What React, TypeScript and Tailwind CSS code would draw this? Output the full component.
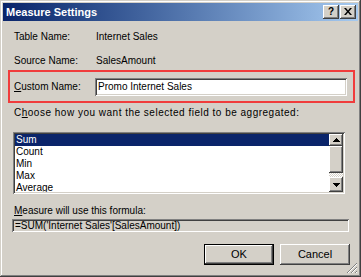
const raised =
  "shadow-[inset_-1px_-1px_0_#404040,inset_1px_1px_0_#ffffff,inset_-2px_-2px_0_#808080]";
const sunken =
  "shadow-[inset_1px_1px_0_#808080,inset_-1px_-1px_0_#ffffff,inset_2px_2px_0_#404040,inset_-2px_-2px_0_#d4d0c8]";

function Up() {
  return (
    <svg width="7" height="4" viewBox="0 0 7 4">
      <path d="M3 0h1v1h1v1h1v1h1v1H0V3h1V2h1V1h1z" fill="#000" />
    </svg>
  );
}
function Down() {
  return (
    <svg width="7" height="4" viewBox="0 0 7 4">
      <path d="M0 0h7v1H6v1H5v1H4v1H3V3H2V2H1V1H0z" fill="#000" />
    </svg>
  );
}

export default function App() {
  const items = ["Sum", "Count", "Min", "Max", "Average"];
  return (
    <div className="relative w-[361px] h-[277px] bg-[#d4d0c8] p-[3px] flex flex-col text-[10px] text-black font-['Liberation_Sans',Arial,sans-serif] shadow-[inset_-1px_-1px_0_#404040,inset_1px_1px_0_#d4d0c8,inset_-2px_-2px_0_#808080,inset_2px_2px_0_#ffffff] overflow-hidden">
      {/* Title bar */}
      <div className="h-[18px] flex items-center justify-between pl-[3px] pr-[2px] bg-gradient-to-r from-[#0a246a] to-[#a6caf0]">
        <span className="text-white font-bold text-[11px] leading-none">Measure Settings</span>
        <div className="flex gap-[1px]">
          <div className={`w-[16px] h-[14px] bg-[#d4d0c8] ${raised} flex items-center justify-center text-[10px] font-bold leading-none pb-[1px]`}>
            ?
          </div>
          <div className={`w-[16px] h-[14px] bg-[#d4d0c8] ${raised} flex items-center justify-center pb-[1px]`}>
            <svg width="8" height="7" viewBox="0 0 8 7">
              <path d="M0 0h2l2 2.5L6 0h2L5 3.5 8 7H6L4 4.5 2 7H0l3-3.5z" fill="#000" />
            </svg>
          </div>
        </div>
      </div>

      {/* Rows */}
      <div className="mt-[7px] h-[16px] flex items-center pl-[11px]">
        <span className="w-[82px]">Table Name:</span>
        <span>Internet Sales</span>
      </div>
      <div className="mt-[8px] h-[16px] flex items-center pl-[11px]">
        <span className="w-[82px]">Source Name:</span>
        <span>SalesAmount</span>
      </div>

      {/* Custom name highlighted */}
      <div className="mt-[2px] ml-[5px] mr-[3px] h-[33px] border-2 border-[#f03c3c] flex items-center pl-[4px] pr-[6px]">
        <span className="w-[81px]">
          <span className="underline">C</span>ustom Name:
        </span>
        <div className={`flex-1 h-[18px] bg-white ${sunken} flex items-center pl-[3px]`}>
          Promo Internet Sales
        </div>
      </div>

      <div className="mt-[1px] h-[16px] flex items-center pl-[11px]">
        <span className="tracking-[0.5px]">
          C<span className="underline">h</span>oose how you want the selected field to be aggregated:
        </span>
      </div>

      {/* Listbox */}
      <div className={`mt-[12px] ml-[10px] w-[332px] h-[62px] bg-white ${sunken} p-[2px] flex`}>
        <div className="flex-1 flex flex-col overflow-hidden">
          {items.map((it, i) => (
            <div
              key={it}
              className={`h-[12px] shrink-0 leading-[12px] pl-[1px] ${i === 0 ? "bg-[#0a246a] text-white" : ""}`}
            >
              {it}
            </div>
          ))}
        </div>
        <div className="w-[14px] flex flex-col">
          <div className={`h-[12px] bg-[#d4d0c8] ${raised} flex items-center justify-center`}>
            <Up />
          </div>
          <div className={`h-[27px] bg-[#d4d0c8] ${raised}`} />
          <div className="flex-1 bg-[repeating-conic-gradient(#ffffff_0_25%,#d4d0c8_0_50%)] bg-[length:2px_2px]" />
          <div className={`h-[15px] bg-[#d4d0c8] ${raised} flex items-center justify-center`}>
            <Down />
          </div>
        </div>
      </div>

      <div className="mt-[8px] h-[16px] flex items-center pl-[11px]">
        <span>
          <span className="underline">M</span>easure will use this formula:
        </span>
      </div>
      <div className={`mt-[1px] ml-[9px] w-[337px] h-[13px] ${sunken} flex items-center pl-[3px]`}>
        =SUM('Internet Sales'[SalesAmount])
      </div>

      {/* Buttons */}
      <div className="mt-[12px] flex justify-end gap-[6px] pr-[8px]">
        <div className="w-[70px] h-[21px] border border-black">
          <div className={`w-full h-full ${raised} flex items-center justify-center text-[11px]`}>OK</div>
        </div>
        <div className={`w-[70px] h-[21px] ${raised} flex items-center justify-center text-[11px]`}>Cancel</div>
      </div>

      {/* Resize grip */}
      <svg className="absolute right-[3px] bottom-[3px]" width="12" height="12" viewBox="0 0 12 12">
        <path d="M11 1L1 11M11 5L5 11M11 9L9 11" stroke="#808080" strokeWidth="1" />
        <path d="M11 2L2 11M11 6L6 11M11 10L10 11" stroke="#ffffff" strokeWidth="1" />
      </svg>
    </div>
  );
}
